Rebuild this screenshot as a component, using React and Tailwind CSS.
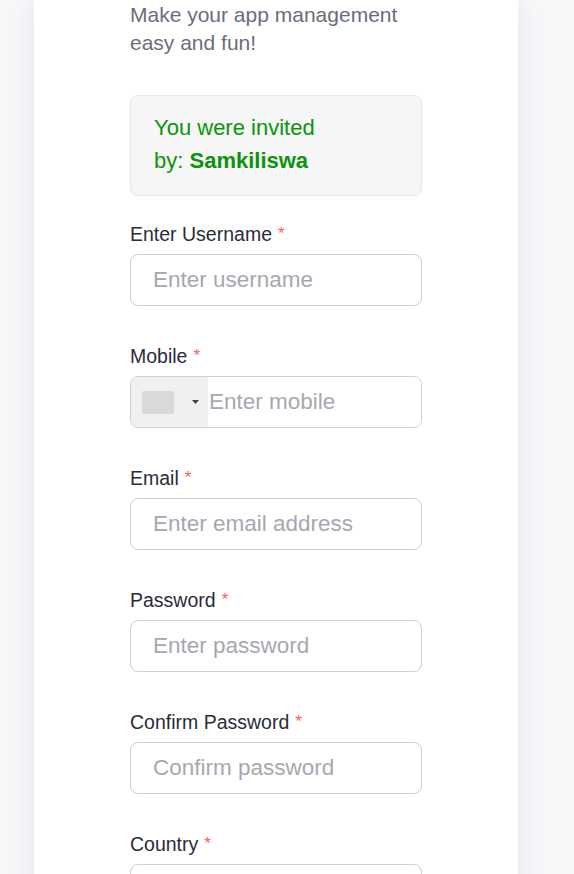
import React from "react";

const fields = [
  { label: "Enter Username", placeholder: "Enter username", type: "text" },
  { label: "Mobile", placeholder: "Enter mobile", type: "tel", phone: true },
  { label: "Email", placeholder: "Enter email address", type: "email" },
  { label: "Password", placeholder: "Enter password", type: "password" },
  { label: "Confirm Password", placeholder: "Confirm password", type: "password" },
  { label: "Country", placeholder: "", type: "text" },
];

const Field = ({ field }) => (
  <div className="mb-[38px]">
    <label className="block h-[24px] text-[19.5px] leading-[24px] text-[#2b2b3a] mb-[8px]">
      {field.label}
      <span className="ml-[6px] text-[17px] leading-none text-[#ff5b5b] relative top-[-2px]">*</span>
    </label>
    {field.phone ? (
      <div className="flex h-[52px] border border-[#cfcfd4] rounded-[8px] overflow-hidden bg-white">
        <div className="flex items-center w-[77px] bg-[#f0f0f0] pl-[11px]">
          <div className="w-[32px] h-[23px] bg-[#d9d9d9] rounded-[2px]" />
          <svg width="7" height="4" viewBox="0 0 7 4" className="ml-[18px]">
            <polygon points="0,0 7,0 3.5,4" fill="#444" />
          </svg>
        </div>
        <input
          type={field.type}
          placeholder={field.placeholder}
          className="flex-1 min-w-0 pl-[1px] text-[22.5px] text-[#333] placeholder-[#a7a7b1] outline-none bg-white"
        />
      </div>
    ) : (
      <input
        type={field.type}
        placeholder={field.placeholder}
        className="block w-full h-[52px] border border-[#cfcfd4] rounded-[8px] pl-[22px] text-[22.5px] text-[#333] placeholder-[#a7a7b1] outline-none bg-white"
      />
    )}
  </div>
);

export default function App() {
  return (
    <div
      className="min-h-screen bg-[#f7f7fa] overflow-hidden"
      style={{ fontFamily: '"Liberation Sans", Arial, sans-serif' }}
    >
      <div className="ml-[34px] w-[484px] min-h-[874px] bg-white shadow-[0_0_22px_rgba(40,40,80,0.09)]">
        <div className="w-[292px] mx-auto">
          <p className="pt-[1px] text-[21px] leading-[28px] text-[#6c6c7e] mb-[38px]">
            Make your app management
            <br />
            easy and fun!
          </p>

          <div className="bg-[#f6f6f6] border border-[#dcefe6] rounded-[8px] pl-[23px] pt-[15px] pb-[18px] mb-[26px]">
            <p className="text-[22px] leading-[33px] text-[#0d930d]">
              You were invited
              <br />
              by: <span className="font-bold">Samkiliswa</span>
            </p>
          </div>

          {fields.map((field) => (
            <Field key={field.label} field={field} />
          ))}
        </div>
      </div>
    </div>
  );
}
